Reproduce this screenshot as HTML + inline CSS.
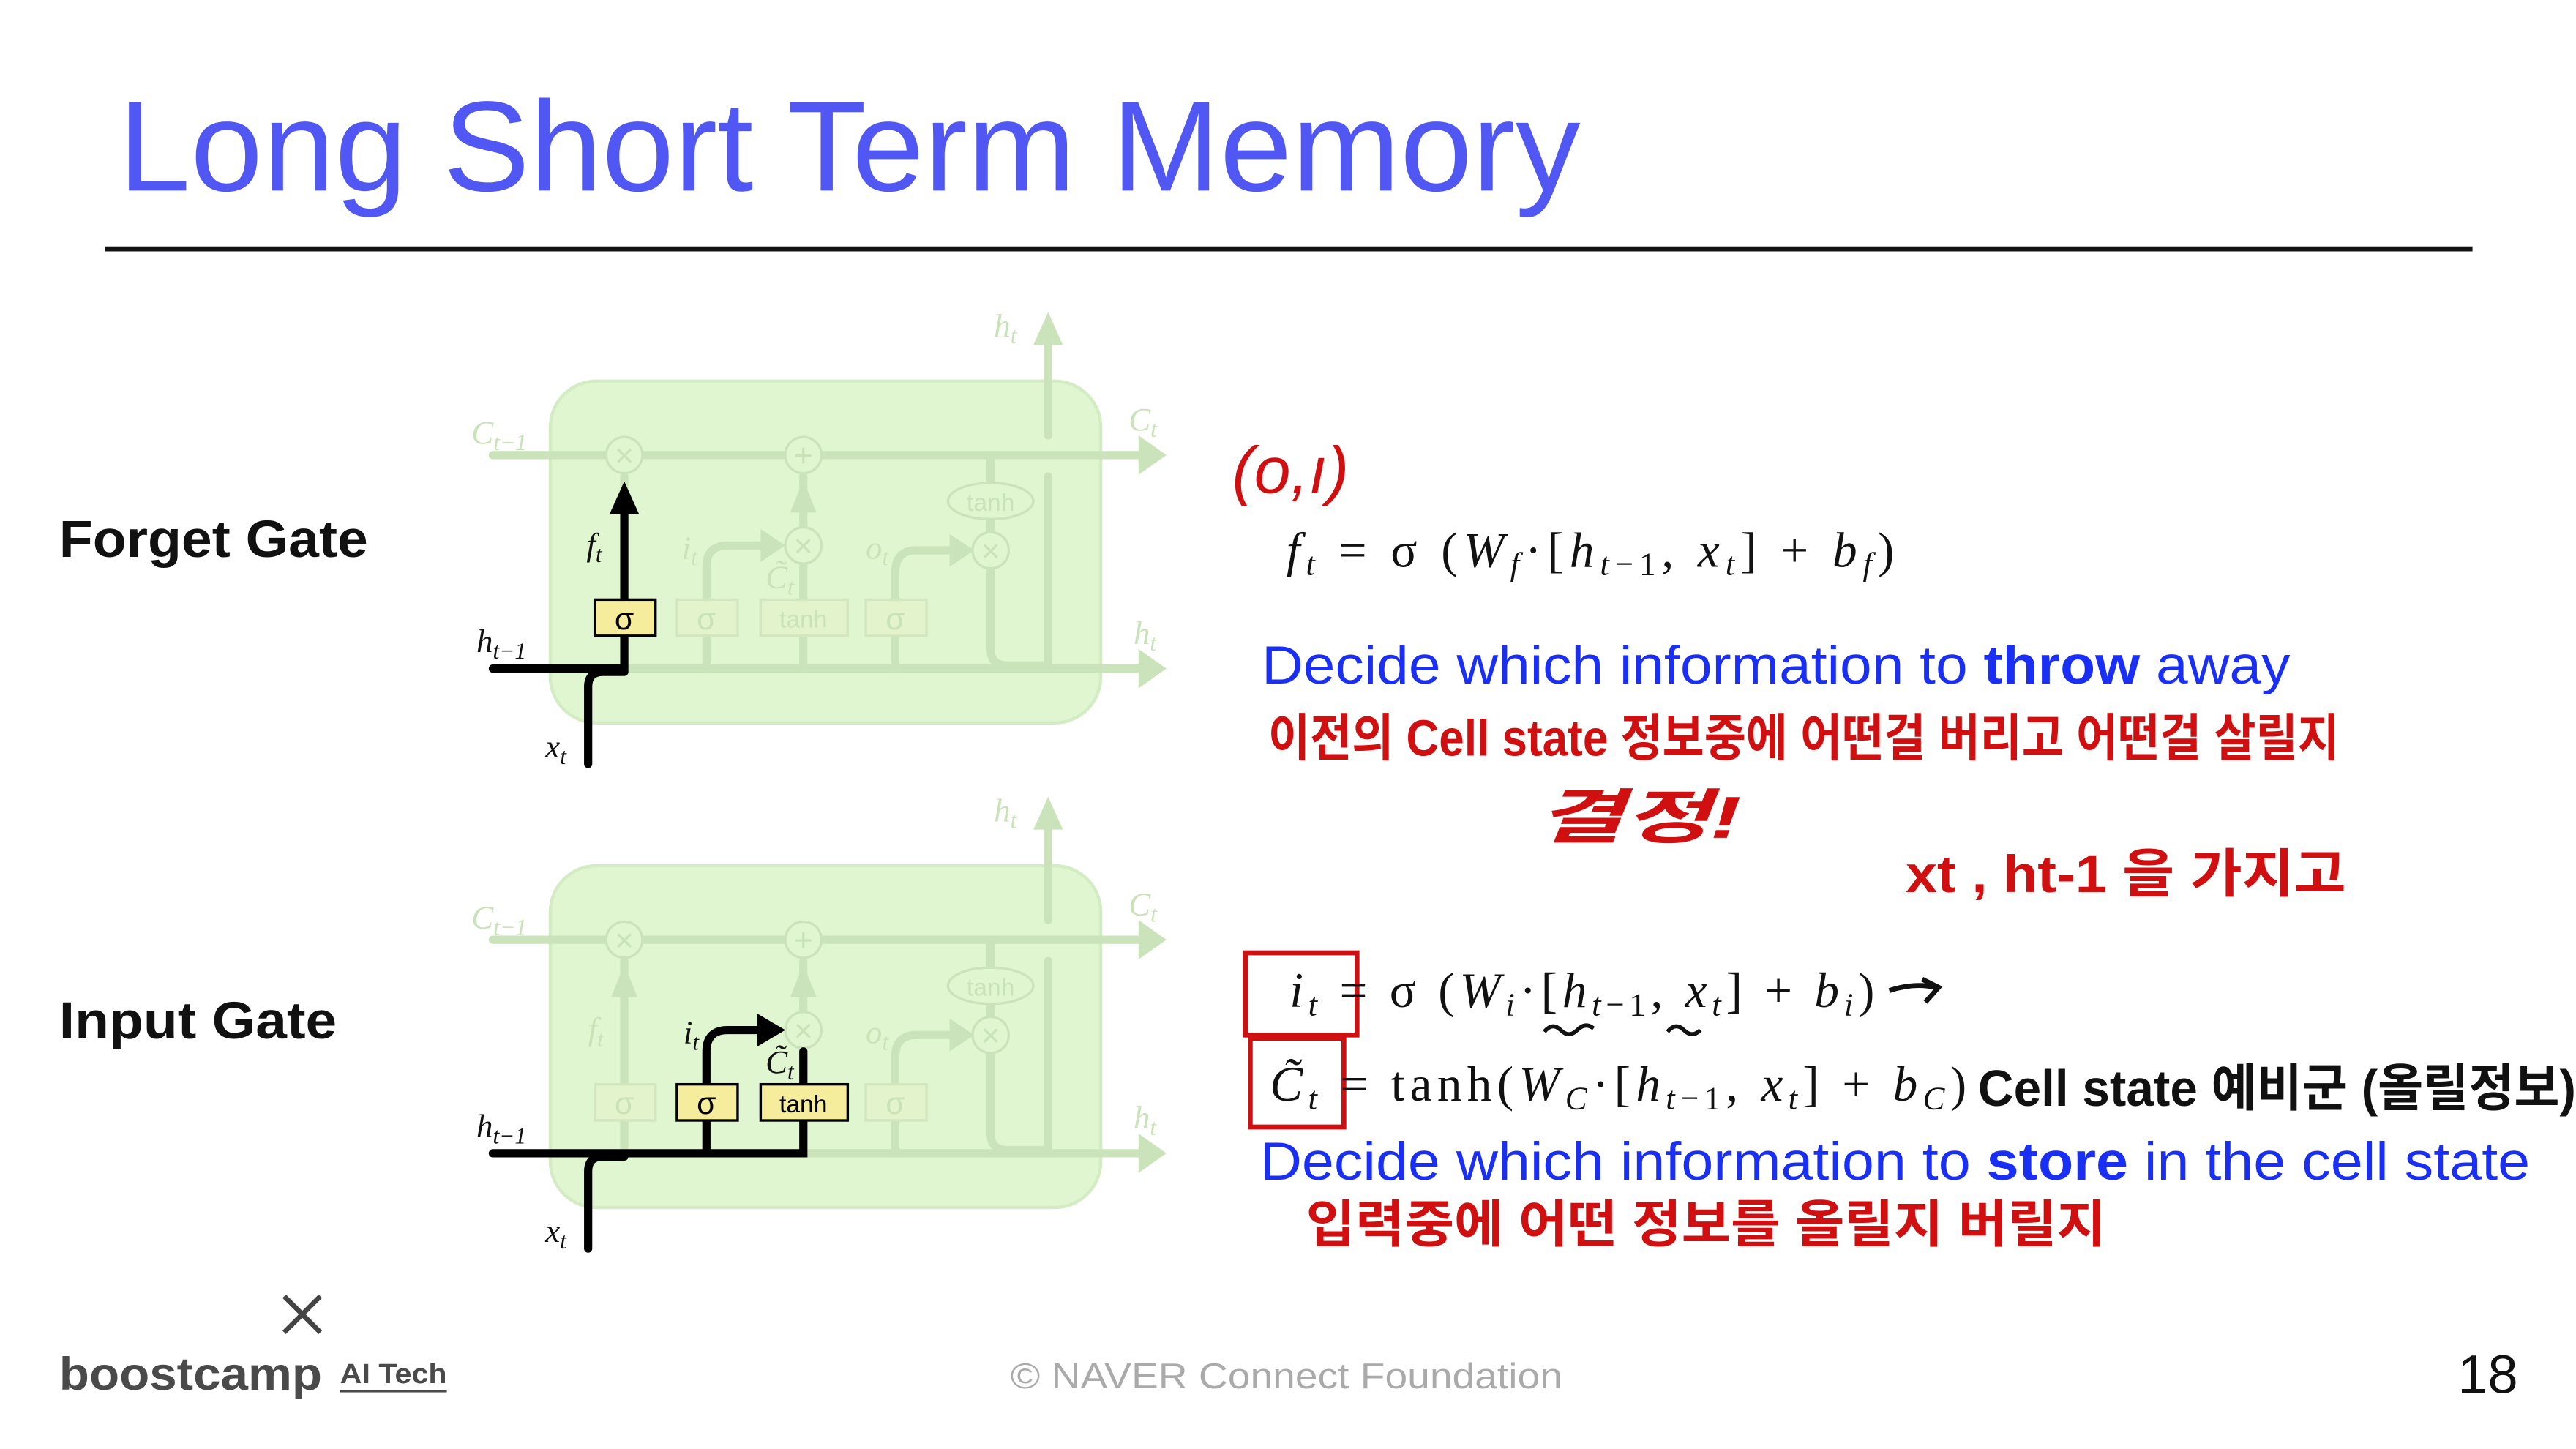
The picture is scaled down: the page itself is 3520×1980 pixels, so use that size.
<!DOCTYPE html>
<html><head><meta charset="utf-8"><style>
html,body{margin:0;padding:0;background:#fff;}
svg{display:block;}
.m{font-family:"Liberation Serif",serif;}
.i{font-style:italic;}
.s{font-family:"Liberation Sans","DejaVu Sans",sans-serif;}
.k{font-family:"Liberation Sans","Noto Sans CJK KR",sans-serif;}
.g{fill:#c9e2b8;}
</style></head><body>
<svg width="3520" height="1980" viewBox="0 0 1568 882" xmlns="http://www.w3.org/2000/svg">
<rect width="1568" height="882" fill="#fff"/>
<text x="72" y="116" class="s" font-size="78" fill="#5057f2" textLength="890" lengthAdjust="spacingAndGlyphs">Long Short Term Memory</text>
<rect x="64" y="150" width="1441" height="3" fill="#111"/>
<text x="36" y="339" class="s" font-size="32" font-weight="bold" fill="#111" textLength="188" lengthAdjust="spacingAndGlyphs">Forget Gate</text>
<text x="36" y="632" class="s" font-size="32" font-weight="bold" fill="#111" textLength="169" lengthAdjust="spacingAndGlyphs">Input Gate</text>

<g id="d1">
<rect x="335" y="232" width="335" height="208" rx="28" fill="#e0f6d0" stroke="#d4ecc4" stroke-width="2"/>
<g stroke="#cbe3bb" stroke-width="5" fill="none" stroke-linecap="round">
<line x1="300" y1="277" x2="695" y2="277"/>
<line x1="300" y1="407" x2="695" y2="407"/>
<line x1="638" y1="265" x2="638" y2="205"/>
<line x1="638" y1="290" x2="638" y2="405"/>
<path d="M603 277 V395 Q603 405 613 405 H638"/>
<line x1="380" y1="407" x2="380" y2="290"/>
<path d="M430 407 V345 Q430 332 443 332 H470"/>
<line x1="489" y1="407" x2="489" y2="290"/>
<path d="M545 407 V348 Q545 335 558 335 H585"/>
</g>
<g fill="#cbe3bb">
<polygon points="693,265 710,277 693,289"/>
<polygon points="693,395 710,407 693,419"/>
<polygon points="629,210 638,190 647,210"/>
<polygon points="372,312 380,292 388,312"/>
<polygon points="481,312 489,292 497,312"/>
<polygon points="463,322 478,332 463,342"/>
<polygon points="578,325 593,335 578,345"/>
</g>
<g fill="#e0f6d0" stroke="#cbe3bb" stroke-width="1.5">
<circle cx="380" cy="277" r="11"/><circle cx="489" cy="277" r="11"/>
<circle cx="489" cy="332" r="11"/><circle cx="603" cy="335" r="11"/>
<ellipse cx="603" cy="305" rx="26" ry="11"/>
</g>
<g fill="#e3f3cc" stroke="#d2e6bf" stroke-width="1.5">
<rect x="362" y="365" width="37" height="22"/><rect x="412" y="365" width="37" height="22"/>
<rect x="463" y="365" width="53" height="22"/><rect x="527" y="365" width="37" height="22"/>
</g>
<g class="s g" font-size="20" text-anchor="middle">
<text x="380" y="284">×</text><text x="489" y="284">+</text><text x="489" y="339">×</text><text x="603" y="342">×</text>
<text x="603" y="311" font-size="15">tanh</text>
<text x="430" y="383" font-size="19">σ</text><text x="489" y="382" font-size="15">tanh</text><text x="545" y="383" font-size="19">σ</text>
</g>
<g class="m i g" font-size="20">
<text x="287" y="270">C<tspan font-size="14" dy="4">t−1</tspan></text>
<text x="687" y="262">C<tspan font-size="14" dy="4">t</tspan></text>
<text x="605" y="205">h<tspan font-size="14" dy="4">t</tspan></text>
<text x="690" y="392">h<tspan font-size="14" dy="4">t</tspan></text>
<text x="415" y="340">i<tspan font-size="14" dy="4">t</tspan></text>
<text x="527" y="340">o<tspan font-size="14" dy="4">t</tspan></text>
</g>
</g>

<text x="466" y="358" class="m i g" font-size="20">C̃<tspan font-size="14" dy="4">t</tspan></text>
<g stroke="#000" stroke-width="5" fill="none" stroke-linecap="round">
<path d="M300 407 H380 V387"/>
<line x1="380" y1="365" x2="380" y2="312"/>
<path d="M358 465 V418 Q358 409 367 409 H380"/>
</g>
<polygon points="371,313 380,293 389,313" fill="#000"/>
<rect x="362" y="365" width="37" height="22" fill="#f5ec9c" stroke="#000" stroke-width="1.5"/>
<text x="380" y="383" class="s" font-size="19" text-anchor="middle">σ</text>
<g class="m i" font-size="20" fill="#111">
<text x="290" y="397">h<tspan font-size="14" dy="4">t−1</tspan></text>
<text x="332" y="461">x<tspan font-size="14" dy="4">t</tspan></text>
<text x="357" y="338">f<tspan font-size="14" dy="4">t</tspan></text>
</g>

<g transform="translate(0,295)">
<rect x="335" y="232" width="335" height="208" rx="28" fill="#e0f6d0" stroke="#d4ecc4" stroke-width="2"/>
<g stroke="#cbe3bb" stroke-width="5" fill="none" stroke-linecap="round">
<line x1="300" y1="277" x2="695" y2="277"/>
<line x1="300" y1="407" x2="695" y2="407"/>
<line x1="638" y1="265" x2="638" y2="205"/>
<line x1="638" y1="290" x2="638" y2="405"/>
<path d="M603 277 V395 Q603 405 613 405 H638"/>
<line x1="380" y1="407" x2="380" y2="290"/>
<line x1="489" y1="407" x2="489" y2="290"/>
<path d="M545 407 V348 Q545 335 558 335 H585"/>
</g>
<g fill="#cbe3bb">
<polygon points="693,265 710,277 693,289"/>
<polygon points="693,395 710,407 693,419"/>
<polygon points="629,210 638,190 647,210"/>
<polygon points="372,312 380,292 388,312"/>
<polygon points="481,312 489,292 497,312"/>
<polygon points="578,325 593,335 578,345"/>
</g>
<g fill="#e0f6d0" stroke="#cbe3bb" stroke-width="1.5">
<circle cx="380" cy="277" r="11"/><circle cx="489" cy="277" r="11"/>
<circle cx="489" cy="332" r="11"/><circle cx="603" cy="335" r="11"/>
<ellipse cx="603" cy="305" rx="26" ry="11"/>
</g>
<g fill="#e3f3cc" stroke="#d2e6bf" stroke-width="1.5">
<rect x="362" y="365" width="37" height="22"/><rect x="527" y="365" width="37" height="22"/>
</g>
<g class="s g" font-size="20" text-anchor="middle">
<text x="380" y="284">×</text><text x="489" y="284">+</text><text x="489" y="339">×</text><text x="603" y="342">×</text>
<text x="603" y="311" font-size="15">tanh</text>
<text x="380" y="383" font-size="19">σ</text><text x="545" y="383" font-size="19">σ</text>
</g>
<g class="m i g" font-size="20">
<text x="287" y="270">C<tspan font-size="14" dy="4">t−1</tspan></text>
<text x="687" y="262">C<tspan font-size="14" dy="4">t</tspan></text>
<text x="605" y="205">h<tspan font-size="14" dy="4">t</tspan></text>
<text x="690" y="392">h<tspan font-size="14" dy="4">t</tspan></text>
<text x="358" y="338">f<tspan font-size="14" dy="4">t</tspan></text>
<text x="527" y="340">o<tspan font-size="14" dy="4">t</tspan></text>
</g>
<g stroke="#000" stroke-width="5" fill="none" stroke-linecap="round">
<path d="M300 407 H489 V387"/>
<line x1="430" y1="407" x2="430" y2="387"/>
<path d="M430 365 V345 Q430 332 443 332 H463"/>
<line x1="489" y1="365" x2="489" y2="345"/>
<path d="M358 465 V418 Q358 409 367 409 H380"/>
</g>
<polygon points="461,322 478,332 461,342" fill="#000"/>
<rect x="412" y="365" width="37" height="22" fill="#f5ec9c" stroke="#000" stroke-width="1.5"/>
<rect x="463" y="365" width="53" height="22" fill="#f5ec9c" stroke="#000" stroke-width="1.5"/>
<text x="430" y="383" class="s" font-size="19" text-anchor="middle">σ</text>
<text x="489" y="382" class="s" font-size="15" text-anchor="middle">tanh</text>
<g class="m i" font-size="20" fill="#111">
<text x="290" y="397">h<tspan font-size="14" dy="4">t−1</tspan></text>
<text x="332" y="461">x<tspan font-size="14" dy="4">t</tspan></text>
<text x="416" y="340">i<tspan font-size="14" dy="4">t</tspan></text>
<text x="466" y="358">C̃<tspan font-size="14" dy="4">t</tspan></text>
</g>
</g>

<text x="750" y="300" class="s" font-size="40" fill="#d01010" font-style="italic">(o,ı)</text>
<text x="783" y="345" class="m" font-size="30" fill="#111" textLength="370" lengthAdjust="spacing"><tspan font-style="italic">f</tspan><tspan font-size="20" dy="5" font-style="italic">t</tspan><tspan dy="-5"> = σ (</tspan><tspan font-style="italic">W</tspan><tspan font-size="20" dy="5" font-style="italic">f</tspan><tspan dy="-5">·[</tspan><tspan font-style="italic">h</tspan><tspan font-size="20" dy="5" font-style="italic">t</tspan><tspan font-size="20">−1</tspan><tspan dy="-5">, </tspan><tspan font-style="italic">x</tspan><tspan font-size="20" dy="5" font-style="italic">t</tspan><tspan dy="-5">]  +  </tspan><tspan font-style="italic">b</tspan><tspan font-size="20" dy="5" font-style="italic">f</tspan><tspan dy="-5">)</tspan></text>
<text x="768" y="416" class="s" font-size="32.5" fill="#1a2ff5" textLength="626" lengthAdjust="spacingAndGlyphs">Decide which information to <tspan font-weight="bold">throw</tspan> away</text>
<text x="772" y="460" class="k" font-size="31" font-weight="bold" fill="#d01010" textLength="652" lengthAdjust="spacingAndGlyphs">이전의 Cell state 정보중에 어떤걸 버리고 어떤걸 살릴지</text>
<text x="935" y="510" class="k" font-size="36" font-weight="bold" fill="#d01010" font-style="italic" textLength="125" lengthAdjust="spacingAndGlyphs">결정!</text>
<text x="1160" y="543" class="k" font-size="32" font-weight="bold" fill="#d01010" textLength="268" lengthAdjust="spacingAndGlyphs">xt , ht-1 을 가지고</text>

<rect x="758" y="580" width="68" height="50" fill="none" stroke="#d01010" stroke-width="3"/>
<rect x="761" y="632" width="57" height="54" fill="none" stroke="#d01010" stroke-width="3"/>
<text x="785" y="613" class="m" font-size="30" fill="#111" textLength="356" lengthAdjust="spacing"><tspan font-style="italic">i</tspan><tspan font-size="20" dy="5" font-style="italic">t</tspan><tspan dy="-5"> = σ (</tspan><tspan font-style="italic">W</tspan><tspan font-size="20" dy="5" font-style="italic">i</tspan><tspan dy="-5">·[</tspan><tspan font-style="italic">h</tspan><tspan font-size="20" dy="5" font-style="italic">t</tspan><tspan font-size="20">−1</tspan><tspan dy="-5">, </tspan><tspan font-style="italic">x</tspan><tspan font-size="20" dy="5" font-style="italic">t</tspan><tspan dy="-5">]  +  </tspan><tspan font-style="italic">b</tspan><tspan font-size="20" dy="5" font-style="italic">i</tspan><tspan dy="-5">)</tspan></text>
<path d="M1150 603 Q1165 598 1178 601 M1170 596 L1180 601 L1172 610" stroke="#111" stroke-width="3" fill="none"/>
<path d="M940 628 q5 -6 10 -1 t10 0 t10 -1 M1015 628 q5 -6 10 -1 t10 0" stroke="#111" stroke-width="2.5" fill="none"/>
<text x="773" y="670" class="m" font-size="30" fill="#111" textLength="424" lengthAdjust="spacing"><tspan font-style="italic">C̃</tspan><tspan font-size="20" dy="5" font-style="italic">t</tspan><tspan dy="-5"> = tanh(</tspan><tspan font-style="italic">W</tspan><tspan font-size="20" dy="5" font-style="italic">C</tspan><tspan dy="-5">·[</tspan><tspan font-style="italic">h</tspan><tspan font-size="20" dy="5" font-style="italic">t</tspan><tspan font-size="20">−1</tspan><tspan dy="-5">, </tspan><tspan font-style="italic">x</tspan><tspan font-size="20" dy="5" font-style="italic">t</tspan><tspan dy="-5">]  +  </tspan><tspan font-style="italic">b</tspan><tspan font-size="20" dy="5" font-style="italic">C</tspan><tspan dy="-5">)</tspan></text>
<text x="1204" y="673" class="k" font-size="31" font-weight="bold" fill="#111" textLength="364" lengthAdjust="spacingAndGlyphs">Cell state 예비군 (올릴정보)</text>
<text x="767" y="718" class="s" font-size="32.5" fill="#1a2ff5" textLength="773" lengthAdjust="spacingAndGlyphs">Decide which information to <tspan font-weight="bold">store</tspan> in the cell state</text>
<text x="795" y="756" class="k" font-size="31" font-weight="bold" fill="#d01010" textLength="487" lengthAdjust="spacingAndGlyphs">입력중에 어떤 정보를 올릴지 버릴지</text>

<path d="M173 789 L195 811 M195 789 L173 811" stroke="#444" stroke-width="3"/>
<text x="36" y="846" class="s" font-size="28" font-weight="bold" fill="#4a4a4a" textLength="160" lengthAdjust="spacingAndGlyphs">boostcamp</text>
<text x="207" y="842" class="s" font-size="17" font-weight="bold" fill="#4a4a4a" textLength="65" lengthAdjust="spacingAndGlyphs">AI Tech</text>
<rect x="207" y="846" width="65" height="1.5" fill="#4a4a4a"/>
<text x="615" y="845" class="s" font-size="22" fill="#aaa" textLength="336" lengthAdjust="spacingAndGlyphs">©  NAVER Connect Foundation</text>
<text x="1496" y="848" class="s" font-size="33" fill="#111">18</text>
</svg>
</body></html>
